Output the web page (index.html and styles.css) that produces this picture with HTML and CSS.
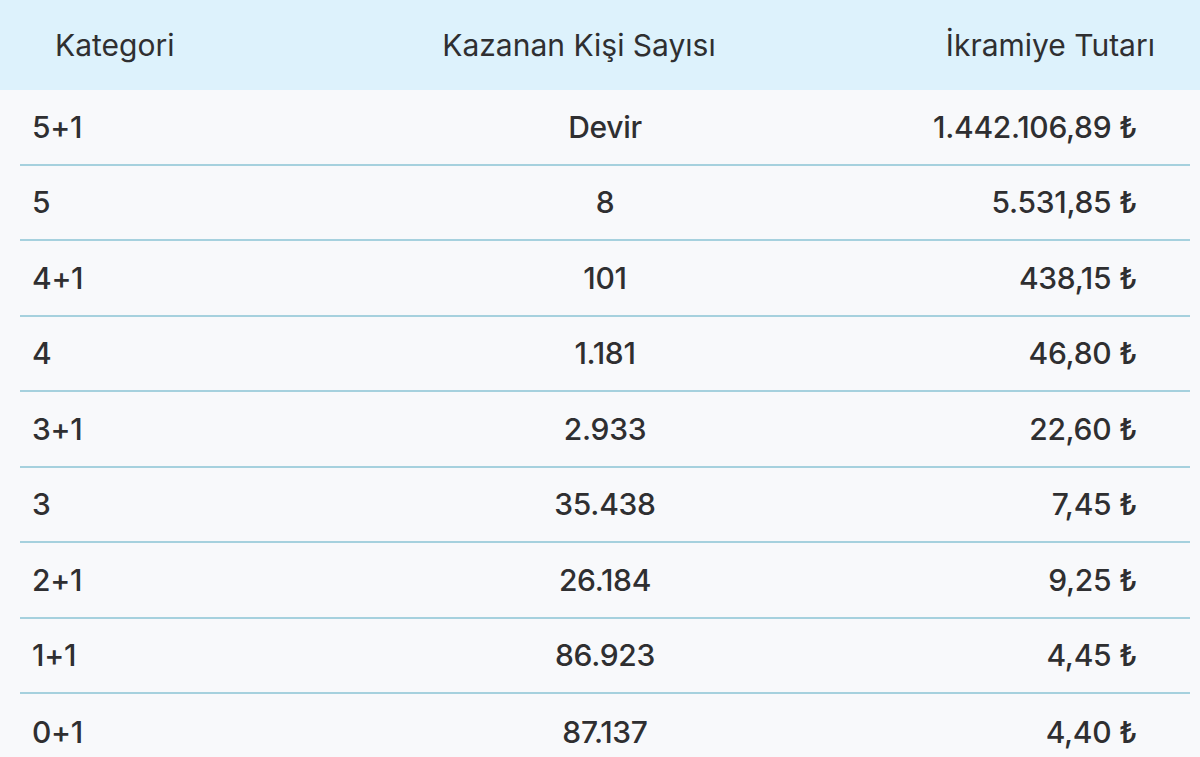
FILE: index.html
```html
<!DOCTYPE html>
<html lang="tr">
<head>
<meta charset="utf-8">
<link rel="stylesheet" href="styles.css">
</head>
<body>
<div class="page">
  <div class="head">
    <div class="h-cat">Kategori</div>
    <div class="h-mid">Kazanan Kişi Sayısı</div>
    <div class="h-amt">İkramiye Tutarı</div>
  </div>
  <div class="rows">
    <div class="row"><div class="c-cat">5+1</div><div class="c-mid">Devir</div><div class="c-amt">1.442.106,89 ₺</div></div>
    <div class="row"><div class="c-cat">5</div><div class="c-mid">8</div><div class="c-amt">5.531,85 ₺</div></div>
    <div class="row"><div class="c-cat">4+1</div><div class="c-mid">101</div><div class="c-amt">438,15 ₺</div></div>
    <div class="row"><div class="c-cat">4</div><div class="c-mid">1.181</div><div class="c-amt">46,80 ₺</div></div>
    <div class="row"><div class="c-cat">3+1</div><div class="c-mid">2.933</div><div class="c-amt">22,60 ₺</div></div>
    <div class="row"><div class="c-cat">3</div><div class="c-mid">35.438</div><div class="c-amt">7,45 ₺</div></div>
    <div class="row"><div class="c-cat">2+1</div><div class="c-mid">26.184</div><div class="c-amt">9,25 ₺</div></div>
    <div class="row"><div class="c-cat">1+1</div><div class="c-mid">86.923</div><div class="c-amt">4,45 ₺</div></div>
    <div class="row"><div class="c-cat">0+1</div><div class="c-mid">87.137</div><div class="c-amt">4,40 ₺</div></div>
  </div>
</div>
</body>
</html>
```

FILE: styles.css
```css
html, body {
  margin: 0;
  padding: 0;
  background: #f8f9fb;
}
body {
  font-family: "Inter", "Noto Sans", sans-serif;
  color: #2f2f31;
  overflow: hidden;
}
.head {
  height: 90px;
  background: #ddf2fc;
  display: grid;
  grid-template-columns: 300px 1fr 352px;
  align-items: center;
  padding: 0 45px 0 55px;
  font-size: 30px;
  font-weight: 400;
  letter-spacing: 0;
}
.h-mid { text-align: center; white-space: nowrap; }
.h-amt { text-align: right; white-space: nowrap; }
.rows {
  margin: 0 10px 0 20px;
}
.row {
  box-sizing: border-box;
  height: 75.5px;
  display: grid;
  grid-template-columns: 1fr 1fr 1fr;
  align-items: center;
  border-bottom: 2px solid #a6d1de;
  padding: 0 12px;
  font-size: 30px;
  font-weight: 500;
  letter-spacing: -0.3px;
}
.row:last-child { border-bottom: none; }
.c-mid { text-align: center; }
.c-amt { text-align: right; padding-right: 41px; }
```
